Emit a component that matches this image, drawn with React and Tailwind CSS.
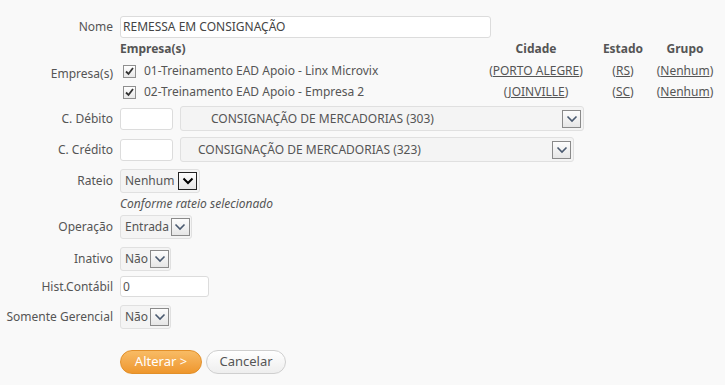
import React from "react";

const Chevron = ({ dark }) => (
  <svg width="12" height="8" viewBox="0 0 12 8">
    <path d="M1.5 1.5 L6 6 L10.5 1.5" fill="none" stroke={dark ? "#000" : "#4a5a70"} strokeWidth={dark ? 2 : 1.6} />
  </svg>
);

const ArrowBox = ({ dark }) => (
  <span
    className={
      "flex h-[18px] w-[19px] shrink-0 items-center justify-center border bg-gradient-to-b from-[#fdfdfd] to-[#e6e6e6] " +
      (dark ? "border-[#222]" : "border-[#8a8a8a]")
    }
  >
    <Chevron dark={dark} />
  </span>
);

const SmallSelect = ({ value, w, dark }) => (
  <div
    className={
      "flex h-[24px] items-center justify-between gap-[2px] rounded-[3px] border border-[#e0e0e0] bg-[#f4f4f4] pl-[4px] pr-[2px] " + w
    }
  >
    <span>{value}</span>
    <ArrowBox dark={dark} />
  </div>
);

const Check = () => (
  <span className="flex h-[13px] w-[13px] items-center justify-center border border-[#8f8f8f] bg-gradient-to-b from-[#ffffff] to-[#e8e8e8]">
    <svg width="11" height="11" viewBox="0 0 11 11">
      <path d="M2 5.5 L4.5 8 L9 2" fill="none" stroke="#333" strokeWidth="1.8" />
    </svg>
  </span>
);

const Row = ({ label, h, children, labelClass = "" }) => (
  <div className={"flex items-center " + h}>
    <div className={"w-[114px] shrink-0 pr-[1px] text-right " + labelClass}>{label}</div>
    <div className="ml-[6px] flex items-center">{children}</div>
  </div>
);

const Link = ({ children }) => (
  <span>
    (<span className="underline decoration-[#555]">{children}</span>)
  </span>
);

export default function App() {
  return (
    <div
      className="h-[385px] w-[725px] overflow-hidden bg-[#f9f9f9] text-[12px] text-[#555]"
      style={{ fontFamily: '"Noto Sans", "Open Sans", sans-serif' }}
    >
      <div className="pt-[16px]">
        <Row label="Nome" h="h-[22px]">
          <div className="flex h-[22px] w-[371px] items-center rounded-[3px] border border-[#dcdcdc] bg-white pl-[2px] text-[#444]">
            REMESSA EM CONSIGNAÇÃO
          </div>
        </Row>

        <div className="flex">
          <div className="w-[114px] shrink-0 pr-[1px] pt-[27px] text-right">Empresa(s)</div>
          <div className="ml-[6px] grid grid-cols-[360px_112px_62px_62px] pt-[1px]">
            <div className="h-[21px] font-bold leading-[19px]">Empresa(s)</div>
            <div className="h-[21px] text-center font-bold leading-[19px]">Cidade</div>
            <div className="h-[21px] text-center font-bold leading-[19px]">Estado</div>
            <div className="h-[21px] text-center font-bold leading-[19px]">Grupo</div>

            <div className="flex h-[22px] items-center">
              <span className="ml-[3px] mr-[8px]"><Check /></span>
              01-Treinamento EAD Apoio - Linx Microvix
            </div>
            <div className="flex h-[22px] items-center justify-center"><Link>PORTO ALEGRE</Link></div>
            <div className="flex h-[22px] items-center justify-center"><Link>RS</Link></div>
            <div className="flex h-[22px] items-center justify-center"><Link>Nenhum</Link></div>

            <div className="flex h-[20px] items-center">
              <span className="ml-[3px] mr-[8px]"><Check /></span>
              02-Treinamento EAD Apoio - Empresa 2
            </div>
            <div className="flex h-[20px] items-center justify-center"><Link>JOINVILLE</Link></div>
            <div className="flex h-[20px] items-center justify-center"><Link>SC</Link></div>
            <div className="flex h-[20px] items-center justify-center"><Link>Nenhum</Link></div>
          </div>
        </div>

        <div className="h-[4px]" />
        <Row label="C. Débito" h="h-[25px]">
          <div className="h-[22px] w-[53px] rounded-[3px] border border-[#dcdcdc] bg-white" />
          <div className="ml-[7px] flex h-[25px] w-[404px] items-center justify-between rounded-[3px] border border-[#e0e0e0] bg-[#f4f4f4] pl-[30px] pr-[2px]">
            <span>CONSIGNAÇÃO DE MERCADORIAS (303)</span>
            <ArrowBox />
          </div>
        </Row>
        <div className="h-[6px]" />
        <Row label="C. Crédito" h="h-[25px]">
          <div className="h-[22px] w-[53px] rounded-[3px] border border-[#dcdcdc] bg-white" />
          <div className="ml-[7px] flex h-[25px] w-[394px] items-center justify-between rounded-[3px] border border-[#e0e0e0] bg-[#f4f4f4] pl-[17px] pr-[2px]">
            <span>CONSIGNAÇÃO DE MERCADORIAS (323)</span>
            <ArrowBox />
          </div>
        </Row>
        <div className="h-[7px]" />
        <Row label="Rateio" h="h-[24px]">
          <SmallSelect value="Nenhum" w="w-[80px]" dark />
        </Row>
        <div className="ml-[120px] flex h-[22px] items-center italic">Conforme rateio selecionado</div>
        <Row label="Operação" h="h-[24px]">
          <SmallSelect value="Entrada" w="w-[72px]" />
        </Row>
        <div className="h-[8px]" />
        <Row label="Inativo" h="h-[24px]">
          <SmallSelect value="Não" w="w-[51px]" />
        </Row>
        <div className="h-[5px]" />
        <Row label="Hist.Contábil" h="h-[21px]">
          <div className="flex h-[21px] w-[89px] items-center rounded-[3px] border border-[#dcdcdc] bg-white pl-[2px]">0</div>
        </Row>
        <div className="h-[8px]" />
        <Row label="Somente Gerencial" h="h-[24px]">
          <SmallSelect value="Não" w="w-[51px]" />
        </Row>
        <div className="h-[21px]" />
        <div className="ml-[120px] flex gap-[4px]">
          <button className="h-[24px] w-[82px] rounded-full border border-[#e2902a] bg-gradient-to-b from-[#f8bb64] to-[#ee972c] text-[13px] text-white">
            Alterar &gt;
          </button>
          <button className="h-[24px] w-[80px] rounded-full border border-[#cfcfcf] bg-gradient-to-b from-[#ffffff] to-[#eeeeee] text-[13px] text-[#555]">
            Cancelar
          </button>
        </div>
      </div>
    </div>
  );
}
